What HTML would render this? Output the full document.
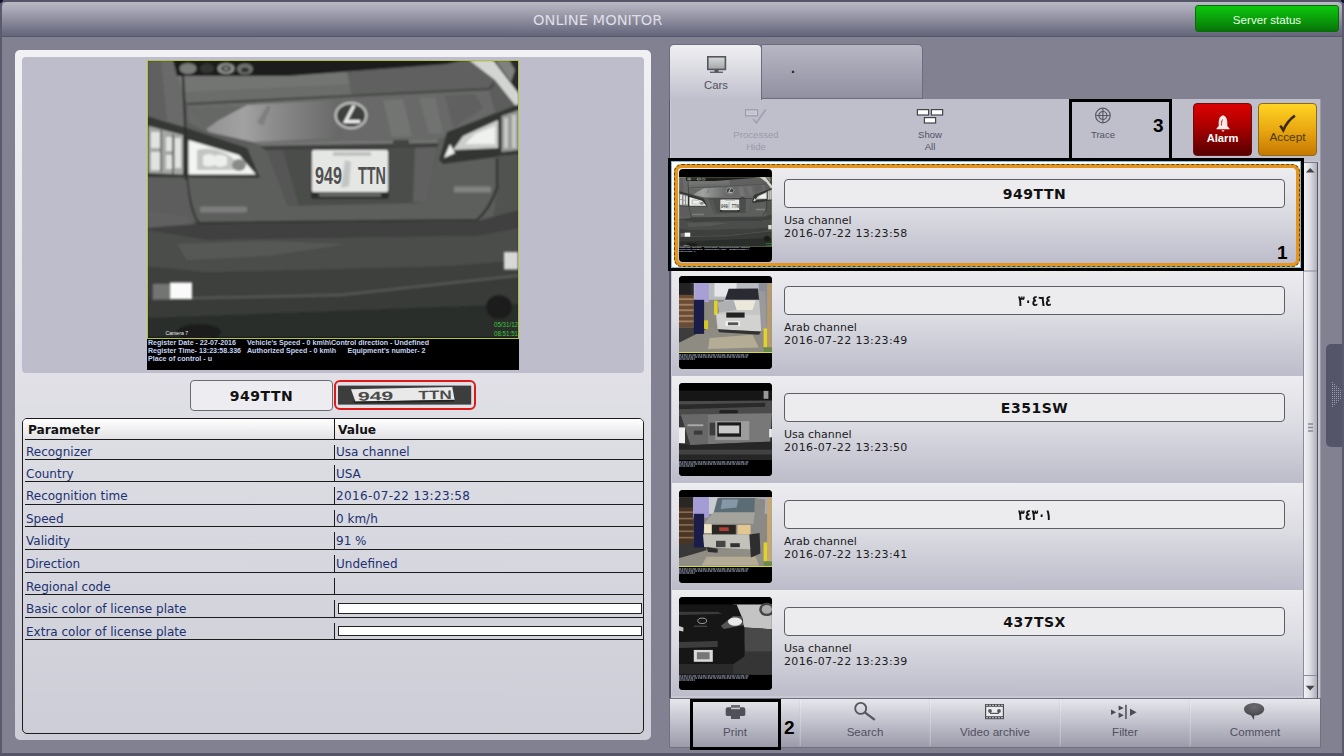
<!DOCTYPE html>
<html lang="en">
<head>
<meta charset="utf-8">
<title>Online Monitor</title>
<style>
*{box-sizing:border-box;margin:0;padding:0}
html,body{width:1344px;height:756px;overflow:hidden}
body{position:relative;background:#818191;font-family:"Liberation Sans",sans-serif;color:#222}
.abs{position:absolute}
.ver{font-family:"DejaVu Sans","Liberation Sans",sans-serif}
/* window frame */
#frT{left:0;top:0;width:1344px;height:2px;background:#555567}
#frL{left:0;top:0;width:2px;height:756px;background:#5a5a6c}
#frR{left:1342px;top:0;width:2px;height:756px;background:#5a5a6c}
#frB{left:0;top:753px;width:1344px;height:3px;background:#555567}
#cTL{left:0;top:0;width:3px;height:3px;background:#0a1430;border-bottom-right-radius:3px}#cTR{left:1341px;top:0;width:3px;height:3px;background:#0a1430;border-bottom-left-radius:3px}
#title{left:2px;top:2px;width:1340px;height:35px;background:linear-gradient(#babac6,#64647a);border-bottom:1px solid #565669;border-top-left-radius:5px;border-top-right-radius:5px}
#ttext{left:533px;top:10px;font-size:14.6px;color:#dedee6;white-space:nowrap;line-height:20px}
#srv{left:1195px;top:5px;width:144px;height:27px;border-radius:3px;background:linear-gradient(#0cc60c,#0aa00a 50%,#087408);border:1px solid #0a6a0a;color:#e8ffe8;font-size:11.6px;text-align:center;line-height:28px;padding-left:0}
/* left panel */
#lp{left:15px;top:50px;width:636px;height:690px;border-radius:5px;background:linear-gradient(#f1f1f4,#cdcdd7)}
#imgbox{left:22px;top:57px;width:622px;height:316px;border-radius:4px;background:#bdbdcb}
#ptxt{left:190px;top:380px;width:143px;height:31px;border:1px solid #6a6a72;border-radius:4px;background:#ededf1;text-align:center;font-weight:bold;font-size:14px;letter-spacing:.5px;line-height:31px;color:#111}
#pimg{left:333.5px;top:380px;width:142.5px;height:30px;border:2px solid #e01818;border-radius:6px;background:#e0e0e6}
/* table */
#tbl{left:22px;top:418px;width:622px;height:316px;border:1px solid #1c1c1c;border-radius:5px}
#th{left:23px;top:419px;width:620px;height:20px;border-radius:4px 4px 0 0;background:linear-gradient(#ffffff,#e2e2e6)}
.hl{left:25px;width:618px;height:1px;background:#1c1c1c}
.vl{left:334px;width:1px;background:#1c1c1c}
.tc{font-size:12px;color:#203070;white-space:nowrap;line-height:16px}
  .thc{font-size:12.2px;font-weight:bold;color:#111;white-space:nowrap;line-height:16px}
.cbar{left:338px;width:304px;height:9px;background:#fff;border:1px solid #222}
</style>
</head>
<body>
<div class="abs" id="title"></div>
<div class="abs ver" id="ttext">ONLINE MONITOR</div>
<div class="abs" id="srv">Server status</div>

<div class="abs" id="lp"></div>
<div class="abs" id="imgbox"></div>
<!--MAINIMG-->
<svg width="0" height="0" style="position:absolute">
<defs>
<filter id="blT" x="-5%" y="-5%" width="110%" height="110%"><feGaussianBlur stdDeviation="0.6"/></filter><filter id="bl1" x="-5%" y="-5%" width="110%" height="110%"><feGaussianBlur stdDeviation="1.1"/></filter>
<filter id="bl2" x="-10%" y="-10%" width="120%" height="120%"><feGaussianBlur stdDeviation="3"/></filter>
<linearGradient id="gBody" x1="0" y1="0" x2="0" y2="1"><stop offset="0" stop-color="#6a6a6a"/><stop offset="0.35" stop-color="#5e5e5e"/><stop offset="0.6" stop-color="#505050"/><stop offset="0.8" stop-color="#424242"/><stop offset="1" stop-color="#2c2c2c"/></linearGradient>
<linearGradient id="gRefl" x1="0" y1="0" x2="1" y2="0"><stop offset="0" stop-color="#8a8a8a"/><stop offset="0.35" stop-color="#a2a2a2"/><stop offset="0.55" stop-color="#8c8c8c"/><stop offset="1" stop-color="#666"/></linearGradient>
<symbol id="car1" viewBox="0 0 372 310" preserveAspectRatio="none">
<rect width="372" height="310" fill="#000"/>
<g filter="url(#bl1)"><rect x="0" y="0" width="372" height="278" fill="#5b5d5b"/><path d="M0 0H26L31 17L38 40L40 72L0 60Z" fill="#696b69"/><path d="M0 0H14L20 60L0 56Z" fill="#5f615f"/><path d="M30 16L140 16L300 4L330 0L346 24L342 29L40 44Z" fill="#6b6d6b"/><path d="M30 16L140 16L200 12L205 24L36 32Z" fill="#737573"/><path d="M200 12L300 4L330 0L346 24L342 29L205 36Z" fill="#5f615f"/><path d="M26 0H316L300 4L140 16L30 16Z" fill="#1b1d1b"/><ellipse cx="41" cy="8.500" rx="8.500" ry="5.500" fill="#797b79"/><ellipse cx="60" cy="8.500" rx="7" ry="5" fill="#333533"/><ellipse cx="79" cy="8.500" rx="8.500" ry="5.500" fill="#8f918f"/><ellipse cx="79" cy="8.500" rx="5" ry="3.200" fill="#393b39"/><ellipse cx="79" cy="8.500" rx="2.600" ry="1.600" fill="#878987"/><ellipse cx="98" cy="9" rx="8" ry="5.500" fill="#6f716f"/><ellipse cx="98" cy="10" rx="4" ry="2.500" fill="#2f312f"/><path d="M330 0H372V44L352 24Z" fill="#292b29"/><path d="M322 0H346L372 34V50L348 20Z" fill="#d3d5d3"/><path d="M348 0H362L368 10L364 22Z" fill="#7f817f"/><path d="M40 44L342 29L348 52L300 76L290 80L106 82L60 72L41 62Z" fill="#676967"/><path d="M42 48L190 40L196 78L106 82L62 72Z" fill="url(#gRefl)"/><path d="M42 48L100 45L72 60L58 70Z" fill="#656765"/><path d="M110 62L120 46L124 46L116 66Z" fill="#6f716f" opacity=".6"/><path d="M236 40l20-1l9 37l-20 1z" fill="#737573"/><path d="M272 38l16-1l8 36l-14 1z" fill="#717371"/><path d="M298 36l30-2l8 14l-30 20z" fill="#5f615f"/><path d="M40 44L342 29L347 23" stroke="#434543" stroke-width="2" fill="none"/><path d="M106 82L290 80L292 84L116 87Z" fill="#737573"/><path d="M112 86L292 83L290 88L120 91Z" fill="#3f413f"/><path d="M41 116L112 116L100 88L106 82L120 91L140 146L282 142L292 84L300 76L348 52L350 130Q340 158 330 160L52 163Q44 150 41 116Z" fill="#5d5f5d"/><path d="M120 90L290 87L280 143L141 146Z" fill="#4b4d4b"/><path d="M268 88L290 87L280 143L266 142Z" fill="#5f615f"/><path d="M120 90L136 90L152 146L141 146Z" fill="#555755"/><rect x="246" y="80" width="16" height="6" fill="#434543"/><ellipse cx="204" cy="55.500" rx="15.300" ry="12.500" fill="#3d3f3d" stroke="#bdbfbd" stroke-width="2.400"/><path d="M207 45.500L198.500 61.500H213" stroke="#f2f2f2" stroke-width="3" fill="none"/><rect x="164" y="89" width="78" height="50" rx="2" fill="#2b2d2b"/><rect x="165" y="90" width="76" height="42" rx="1.500" fill="#e5e7e5"/><rect x="186" y="92" width="38" height="4" fill="#bfc1bf"/><path d="M198 100l6 2l-2 24l-8 2z" fill="#c3c5c3"/><rect x="172" y="133.500" width="62" height="3" fill="#6f716f"/><path d="M0 56L40 68L100 88L113 118L0 117Z" fill="#353735"/><path d="M1.500 66L36 75V114.500L1.500 113Z" fill="#a5a7a5"/><path d="M4 72h9v16h-9zM4 92h9v18h-9zM19 77h6v14h-6zM28 78h6v30h-6zM19 95h6v14h-6z" fill="#e1e3e1"/><path d="M14 70v42M26 74v40" stroke="#4f514f" stroke-width="1.500"/><path d="M41.500 80L92 95L109 114.500L41.500 114.500Z" fill="#f3f5f3"/><path d="M50 90q14-4 30 4q10 6 16 16l-46 0z" fill="#c3c5c3"/><path d="M56 96q6-4 12 0q6-3 12 1l0 8q-8 4-12 0q-6 3-12 0z" fill="#edefed"/><ellipse cx="92" cy="105" rx="7" ry="6" fill="#898b89"/><path d="M36 16L38 60L39 120" stroke="#2b2d2b" stroke-width="2.200" fill="none"/><path d="M292 100L300 72L352 52L372 44V94L296 104Z" fill="#333533"/><path d="M306 90L316 76L351 60V88Z" fill="#cbcdcb"/><path d="M318 84L328 74L348 66V84Z" fill="#eff1ef"/><path d="M297 98l6-14l5 9z" fill="#edefed"/><path d="M354.500 56L372 50V90L354.500 92Z" fill="#979997"/><path d="M357 58h4v30h-4zM365 55h4v33h-4z" fill="#c7c9c7"/><path d="M350 96L372 94V150L346 158Q350 140 350 96Z" fill="#515351"/><path d="M40 118Q43 152 52 163L330 160Q342 150 350 128L350 98" stroke="#2f312f" stroke-width="2.200" fill="none"/><rect x="53" y="146.500" width="47" height="6" rx="1" fill="#858785" opacity=".75"/><rect x="307" y="126.500" width="37" height="6" rx="1" fill="#919391" opacity=".7"/><path d="M0 150L40 156L52 164L330 161L372 150V170L330 176L60 180L0 172Z" fill="#3f413f"/><path d="M0 120L40 120Q42 150 50 162L0 160Z" fill="#5b5d5b"/><path d="M0 150L40 156L48 164L0 168Z" fill="#5f615f"/><path d="M0 170L60 180L330 176L372 168V200L300 206L60 212L0 206Z" fill="#4b4d4b"/><path d="M30 184L120 181L200 184L120 196L40 200Z" fill="#575957"/><path d="M0 206L60 212L300 206L372 200V215L194 234L5 238L0 238Z" fill="#3d3f3d"/><path d="M0 238L194 234L372 215V278H0Z" fill="#393b39"/><path d="M5 239L194 235L372 215.500" stroke="#555755" stroke-width="2.600" fill="none"/><path d="M0 258L372 244V278H0Z" fill="#2b2d2b"/><ellipse cx="352" cy="247" rx="13" ry="12" fill="#1d1f1d"/><ellipse cx="52" cy="272" rx="22" ry="8" fill="#1b1d1b"/><path d="M6 224h18v15h-18z" fill="#737573"/></g>
<!-- reflectors -->
<g filter="url(#bl1)"><rect x="23" y="222.500" width="22" height="16.500" fill="#fafafa"/><rect x="357" y="192" width="14" height="17.500" fill="#d8d8d8"/></g>
<!-- plate text -->
<text x="168" y="124" font-family="Liberation Sans, sans-serif" font-size="24" font-weight="bold" fill="#505050" textLength="27" lengthAdjust="spacingAndGlyphs">949</text>
<text x="211" y="124" font-family="Liberation Sans, sans-serif" font-size="24" font-weight="bold" fill="#505050" textLength="28" lengthAdjust="spacingAndGlyphs">TTN</text>
<!-- frame -->
<rect x="0.5" y="0.5" width="371" height="278" fill="none" stroke="#b4c23c" stroke-width="1"/>
<!-- overlay texts -->
<g font-family="Liberation Sans, sans-serif" font-weight="bold" font-size="6.8" fill="#c6d4f2">
<text x="1" y="285.3" textLength="88" lengthAdjust="spacingAndGlyphs">Register Date - 22-07-2016</text>
<text x="100" y="285.3" textLength="182" lengthAdjust="spacingAndGlyphs">Vehicle's Speed - 0 km\h\Control direction - Undefined</text>
<text x="1" y="293.2" textLength="93" lengthAdjust="spacingAndGlyphs">Register Time- 13:23:58.336</text>
<text x="100" y="293.2" textLength="89" lengthAdjust="spacingAndGlyphs">Authorized Speed - 0 km\h</text>
<text x="200.5" y="293.2" textLength="78" lengthAdjust="spacingAndGlyphs">Equipment's number- 2</text>
<text x="1" y="301" textLength="64" lengthAdjust="spacingAndGlyphs">Place of control - u</text>
</g>
<text x="18.5" y="275" font-family="Liberation Sans, sans-serif" font-size="6" fill="#eee" textLength="22.5" lengthAdjust="spacingAndGlyphs">Camera 7</text>
<text x="347" y="267" font-family="Liberation Sans, sans-serif" font-size="6.5" fill="#3cc43c" textLength="24" lengthAdjust="spacingAndGlyphs">05/31/12</text>
<text x="347" y="276.4" font-family="Liberation Sans, sans-serif" font-size="6.5" fill="#3cc43c" textLength="24" lengthAdjust="spacingAndGlyphs">08:51:51</text>
</symbol>
</defs>
</svg>
<svg class="abs" style="left:147px;top:60px" width="372" height="310"><use href="#car1" width="372" height="310"/></svg>

<!--/MAINIMG-->
<div class="abs ver" id="ptxt">949TTN</div>
<div class="abs" id="pimg"></div>
<!--PLATEIMG-->
<svg class="abs" style="left:338px;top:385px" width="134" height="20" viewBox="0 0 134 20"><rect x="0" y="0.600" width="133.200" height="19" fill="#3d3d3d"/><g filter="url(#blT)"><polygon points="13,4.200 114.300,1.900 116.600,15 17.500,16.800" fill="#e9e9e9"/><polygon points="14,16.500 116,14.700 116.500,16.500 18,18.300" fill="#222"/></g><g font-family="Liberation Sans, sans-serif" font-weight="bold" font-size="12.500" fill="#4a4a4a" transform="rotate(-1.200 60 10)"><text x="19.800" y="15" textLength="35.500" lengthAdjust="spacingAndGlyphs">949</text><text x="80.500" y="15" textLength="33.200" lengthAdjust="spacingAndGlyphs">TTN</text></g></svg>

<!--/PLATEIMG-->

<div class="abs" id="tbl"></div>
<div class="abs" id="th"></div>
<!--TABLE-->
<div class="abs ver thc" style="left:28px;top:421.6px">Parameter</div>
<div class="abs ver thc" style="left:338px;top:421.6px">Value</div>
<div class="abs vl" style="top:419px;height:20px"></div>
<div class="abs hl" style="top:439px"></div>
<div class="abs hl" style="top:459px"></div>
<div class="abs hl" style="top:481px"></div>
<div class="abs hl" style="top:504px"></div>
<div class="abs hl" style="top:526px"></div>
<div class="abs hl" style="top:549px"></div>
<div class="abs hl" style="top:572px"></div>
<div class="abs hl" style="top:594px"></div>
<div class="abs hl" style="top:617px"></div>
<div class="abs hl" style="top:639px"></div>
<div class="abs vl" style="top:445px;height:14px"></div>
<div class="abs ver tc" style="left:26px;top:443.5px">Recognizer</div>
<div class="abs ver tc" style="left:336px;top:443.5px">Usa channel</div>
<div class="abs vl" style="top:465px;height:16px"></div>
<div class="abs ver tc" style="left:26px;top:466.0px">Country</div>
<div class="abs ver tc" style="left:336px;top:466.0px">USA</div>
<div class="abs vl" style="top:487px;height:17px"></div>
<div class="abs ver tc" style="left:26px;top:487.6px">Recognition time</div>
<div class="abs ver tc" style="left:336px;top:487.6px;letter-spacing:0.36px">2016-07-22 13:23:58</div>
<div class="abs vl" style="top:510px;height:16px"></div>
<div class="abs ver tc" style="left:26px;top:510.8px">Speed</div>
<div class="abs ver tc" style="left:336px;top:510.8px">0 km/h</div>
<div class="abs vl" style="top:532px;height:17px"></div>
<div class="abs ver tc" style="left:26px;top:533.2px">Validity</div>
<div class="abs ver tc" style="left:336px;top:533.2px">91 %</div>
<div class="abs vl" style="top:555px;height:17px"></div>
<div class="abs ver tc" style="left:26px;top:555.6px">Direction</div>
<div class="abs ver tc" style="left:336px;top:555.6px">Undefined</div>
<div class="abs vl" style="top:578px;height:16px"></div>
<div class="abs ver tc" style="left:26px;top:578.5px">Regional code</div>
<div class="abs vl" style="top:600px;height:17px"></div>
<div class="abs ver tc" style="left:26px;top:601.2px">Basic color of license plate</div>
<div class="abs cbar" style="top:603px;height:11px"></div>
<div class="abs vl" style="top:623px;height:16px"></div>
<div class="abs ver tc" style="left:26px;top:623.5px">Extra color of license plate</div>
<div class="abs cbar" style="top:626px;height:10px"></div>
<!--/TABLE-->

<!--RIGHT-->
<style>
#tab1{left:669px;top:44px;width:93px;height:56px;border:1px solid #6c6c7e;border-bottom:none;border-radius:5px 5px 0 0;background:linear-gradient(#f0f0f3,#d8d8e0 50%,#bfbfcc)}
#tab2{left:761px;top:44px;width:162px;height:55px;border:1px solid #6c6c7e;border-radius:0 5px 0 0;background:linear-gradient(#b7b7c4,#a3a3b2 50%,#9090a1)}
#tbar{left:669px;top:99px;width:652px;height:62px;background:#bfbfcc;border-left:1px solid #58586c;box-shadow:inset 1px 0 #cbcbd6;border-right:1px solid #9a9aaa}
#list{left:669px;top:161px;width:652px;height:537px;background:#c8c8d4;border-left:2px solid #52526a;border-right:1px solid #9a9aaa}
.item{left:672px;width:631px;height:107px;background:linear-gradient(#ededf0,#dcdce3 45%,#bcbcca)}
.thumb{left:679px;width:93px;height:93px;border-radius:4px;background:#000;overflow:hidden}
.pbox{left:784px;width:501px;height:29px;border:1px solid #5e5e66;border-radius:4px;background:#ececef;text-align:center;font-weight:bold;font-size:14px;letter-spacing:.5px;line-height:28px;color:#111}
.itx{left:784px;font-size:11px;line-height:13px;color:#1c1c1c;white-space:nowrap}.itx i{font-style:normal;letter-spacing:.36px}
#sb{left:1303px;top:162px;width:15px;border-left:1px solid #8c8c9a;height:536px;background:linear-gradient(90deg,#f2f2f5,#dadae1 50%,#aeaeba);border-right:1px solid #55555f;border-top:1px solid #77778a}
#btb{left:669px;top:698px;width:652px;height:50px;border:1px solid #70707f;background:linear-gradient(#e6e6ec,#c4c4cf 45%,#9a9aa9)}
.bsep{top:700px;height:46px;background:rgba(255,255,255,.22);border-left:1px solid rgba(90,90,110,.10);width:2px}
.btx{top:724px;width:130px;text-align:center;font-size:11.6px;line-height:16px;color:#50505e;white-space:nowrap}
.ttx{text-align:center;font-size:9.6px;line-height:12px;white-space:nowrap}
.ann{border:3px solid #000}
.annn{font-weight:bold;font-size:19px;line-height:19px;color:#000}
#alarm{left:1193px;top:103px;width:59px;height:53px;border-radius:4px;border:1px solid #6a1010;background:linear-gradient(#dc0000,#b00000 40%,#580000)}
#accept{left:1258px;top:103px;width:59px;height:53px;border-radius:4px;border:1px solid #8a6a18;background:linear-gradient(#ffd422,#eaa812 50%,#c67800)}
#handle{left:1326px;top:344px;width:20px;height:103px;border-radius:5px;background:#55556a}
</style>

<div class="abs" id="tab2"></div>
<div class="abs" style="left:791px;top:61.400px;font-size:14px;line-height:14px;color:#1c1c24;font-weight:bold">.</div>
<div class="abs" id="tbar"></div>
<div class="abs" id="tab1"></div>
<svg class="abs" style="left:705px;top:54px" width="24" height="20" viewBox="0 0 24 20"><defs><linearGradient id="gMon" x1="0" y1="0" x2="0" y2="1"><stop offset="0" stop-color="#d6dada"/><stop offset="1" stop-color="#a2a6aa"/></linearGradient></defs><rect x="2.8" y="2.8" width="17.6" height="12.6" fill="url(#gMon)" stroke="#55555a" stroke-width="1.6"/><rect x="9.5" y="16" width="4" height="2" fill="#55555a"/><rect x="5" y="17.6" width="13" height="1.3" fill="#55555a"/></svg>
<div class="abs" style="left:670px;top:78px;width:92px;text-align:center;font-size:11.3px;line-height:14px;color:#50505a">Cars</div>
<svg class="abs" style="left:743px;top:107px" width="26" height="18" viewBox="0 0 26 18"><rect x="2.6" y="2.8" width="12" height="6" fill="#d0d0da" stroke="#9c9cac" stroke-width="1.3"/><path d="M4.5 5h3l2 1.6h3M4.5 6.6h3l2-1.6h3" stroke="#b4b4c2" stroke-width=".7" fill="none"/><path d="M10 12l3.4 3.8L22.8 2.4" stroke="#a0a0b0" stroke-width="1.7" fill="none"/></svg>
<div class="abs ttx" style="left:716px;top:128.6px;width:80px;color:#9a9aaa">Processed<br>Hide</div>
<svg class="abs" style="left:915px;top:107px" width="30" height="18" viewBox="0 0 30 18"><g fill="#fff" stroke="#44444c" stroke-width="1.2"><rect x="2.4" y="2.6" width="11.2" height="5.4"/><rect x="16.4" y="2.6" width="11.2" height="5.4"/><rect x="9.4" y="10.6" width="11.2" height="5.4"/></g></svg>
<div class="abs ttx" style="left:890px;top:128.6px;width:80px;color:#50505e">Show<br>All</div>
<svg class="abs" style="left:1093px;top:106px" width="20" height="20" viewBox="0 0 20 20"><g fill="none" stroke="#5a5a64" stroke-width="1.2"><circle cx="9.9" cy="9.5" r="7.3"/><circle cx="9.9" cy="9.5" r="4"/><path d="M2.6 9.5h14.6M9.9 2.2v14.6"/></g></svg>
<div class="abs ttx" style="left:1063px;top:128.6px;width:80px;color:#50505e">Trace</div>
<div class="abs" id="alarm"></div>
<svg class="abs" style="left:1214px;top:113px" width="18" height="20" viewBox="0 0 18 20"><path d="M9 2.2c-3 .8-4.300 3.600-4.300 7.200v3.600l-2.200 2.400v.8h13v-.8l-2.200-2.400V9.400C13.300 5.800 12 3 9 2.200z" fill="#ffe8e8"/><path d="M7.400 17.200h3.200L9 19z" fill="#ffe8e8"/><path d="M8.600 6.500c-1 1.400-1.200 3.400-1.200 6" stroke="#b02020" stroke-width="1" fill="none"/></svg>
<div class="abs" style="left:1193px;top:131.6px;width:59px;text-align:center;font-weight:bold;font-size:11.2px;line-height:13px;color:#fff">Alarm</div>
<div class="abs" id="accept"></div>
<svg class="abs" style="left:1277px;top:112px" width="22" height="22" viewBox="0 0 22 22"><path d="M3.300 13.600l3 4.600C9 12 13 7 17.900 3.600" stroke="#3a2c0a" stroke-width="2.600" fill="none" stroke-linecap="butt"/></svg>
<div class="abs" style="left:1258px;top:131.4px;width:59px;text-align:center;font-size:11.8px;line-height:13px;color:#4a3a10">Accept</div>
<div class="abs" id="list"></div>
<div class="abs item" style="top:162px;height:107px"></div>
<div class="abs" style="left:671px;top:161px;width:630px;height:107px;border:1px solid #7cc0e0;background:#fff"></div>
<div class="abs" style="left:674px;top:164px;width:626px;height:103px;border:4px solid #e39520;border-radius:8px;background:linear-gradient(#ededf0,#dcdce3 45%,#bdbdcb)"></div>
<div class="abs" style="left:674px;top:164px;width:626px;height:103px;border:1px dashed #5a4418;border-radius:8px"></div>
<div class="abs thumb" style="top:169px"><!--t1--><svg width="93" height="93" viewBox="0 0 93 93" style="display:block"><use href="#car1" x="0" y="8" width="93" height="77.500"/></svg></div>
<div class="abs pbox ver" style="top:179px">949TTN</div>
<div class="abs itx ver" style="top:213.9px">Usa channel<br><i>2016-07-22 13:23:58</i></div>
<div class="abs item" style="top:269px;height:107px"></div>
<div class="abs thumb" style="top:276px"><!--t2--><svg width="93" height="93" viewBox="0 0 93 93" style="display:block"><rect width="93" height="93" fill="#000"/><g filter="url(#blT)"><rect x="0.0" y="7.1" width="92.9" height="69.0" fill="#8c8a80"/><rect x="0.0" y="7.1" width="92.9" height="16.7" fill="#b8bcc0"/><rect x="35.4" y="7.1" width="22.2" height="13.5" fill="#e4e6e8"/><rect x="79.8" y="7.1" width="13.0" height="26.2" fill="#8a8e98"/><rect x="0.0" y="7.1" width="14.8" height="12.7" fill="#2c2c30"/><rect x="0.0" y="19.0" width="14.8" height="32.5" fill="#6a4c34"/><rect x="0.0" y="22.2" width="14.8" height="1.9" fill="#a08060"/><rect x="0.0" y="27.8" width="14.8" height="1.9" fill="#a08060"/><rect x="0.0" y="33.3" width="14.8" height="1.9" fill="#a08060"/><rect x="0.0" y="38.9" width="14.8" height="1.9" fill="#a08060"/><rect x="0.0" y="44.4" width="14.8" height="1.9" fill="#a08060"/><rect x="0.0" y="51.6" width="28.3" height="15.1" fill="#3c3c3c"/><polygon points="0.0,66.7 28.3,52.4 92.9,52.4 92.9,76.2 0.0,76.2" fill="#8e8c82"/><polygon points="30.6,61.9 73.5,58.7 79.8,71.4 29.0,73.0" fill="#b4ac94"/><rect x="0.0" y="7.1" width="11.6" height="11.1" fill="#222"/><rect x="15.6" y="7.1" width="14.3" height="19.0" fill="#a8a0d4"/><rect x="14.8" y="23.8" width="10.3" height="34.1" fill="#1c1a4a"/><rect x="25.1" y="44.4" width="4.0" height="8.7" fill="#d8c820"/><rect x="35.1" y="24.6" width="3.5" height="14.3" fill="#e0d428"/><polygon points="49.7,12.7 79.0,12.4 80.2,24.6 45.7,24.6" fill="#2a2a32"/><polygon points="45.7,23.8 80.2,23.8 83.8,39.7 38.6,38.9" fill="#c6c6c4"/><polygon points="54.4,24.6 76.7,24.6 73.5,34.1 57.6,34.1" fill="#ece8da"/><polygon points="38.6,26.2 54.4,23.8 57.6,34.1 40.2,36.5" fill="#aeb0b4"/><polygon points="37.0,38.1 83.8,38.9 82.2,55.6 38.6,53.2" fill="#d2d2d0"/><rect x="47.3" y="36.5" width="18.3" height="5.1" fill="#222"/><rect x="46.5" y="45.2" width="14.3" height="4.8" fill="#f4f4f4"/><rect x="48.9" y="46.3" width="10.3" height="2.9" fill="#555"/><polygon points="79.8,14.3 86.2,15.9 87.8,52.4 82.2,55.6" fill="#9a9a9c"/><polygon points="38.6,53.2 82.2,55.6 79.8,58.7 40.2,56.3" fill="#333"/><rect x="88.1" y="7.1" width="4.8" height="64.3" fill="#b49a70"/><rect x="84.6" y="52.4" width="3.5" height="19.0" fill="#e0d428"/><rect x="84.6" y="71.4" width="8.3" height="4.8" fill="#6a8a4a"/></g><rect x="0" y="76" width="93" height="1" fill="#d8d838"/><g stroke="#ccd8f6" stroke-width="0.900" fill="none"><path d="M0 79H70" stroke-dasharray="2.200 0.600 1.200 0.500 3 0.700 0.800 0.600"/><path d="M0 81H69" stroke-dasharray="1.600 0.500 2.400 0.700 1 0.500 2 0.800"/><path d="M0 83H16" stroke-dasharray="1.800 0.600 1.200 0.500"/></g></svg></div>
<div class="abs pbox ver" style="top:286px"><span style="display:inline-block;letter-spacing:0;font-size:15px;transform:scaleX(.74)">٣٠٤٦٤</span></div>
<div class="abs itx ver" style="top:320.9px">Arab channel<br><i>2016-07-22 13:23:49</i></div>
<div class="abs item" style="top:376px;height:107px"></div>
<div class="abs thumb" style="top:383px"><!--t3--><svg width="93" height="93" viewBox="0 0 93 93" style="display:block"><rect width="93" height="93" fill="#000"/><g filter="url(#blT)"><rect x="0.0" y="7.9" width="92.9" height="69.0" fill="#383838"/><rect x="0.0" y="7.9" width="92.9" height="10.3" fill="#161616"/><rect x="84.6" y="7.9" width="4.8" height="7.9" fill="#999"/><polygon points="0.0,18.3 92.9,17.5 92.9,31.7 0.0,33.3" fill="#4c4c4c"/><polygon points="0.0,21.4 86.2,19.8 86.2,23.8 0.0,26.2" fill="#2a2a2a"/><polygon points="2.1,31.7 92.9,30.2 91.0,58.7 11.6,61.9" fill="#787878"/><polygon points="2.1,31.7 29.0,31.4 29.0,61.1 11.6,61.9" fill="#686868"/><rect x="40.2" y="27.0" width="19.0" height="3.2" fill="#222" rx="1.500"/><rect x="36.2" y="38.1" width="34.1" height="19.0" fill="#9c9c9c"/><rect x="30.6" y="39.7" width="5.6" height="12.7" fill="#3c3c3c"/><rect x="38.3" y="39.4" width="23.7" height="14.3" fill="#1c1c1c"/><rect x="39.8" y="42.5" width="20.5" height="7.9" fill="#cacaca"/><rect x="0.0" y="44.4" width="6.0" height="15.9" fill="#f0f0f0"/><rect x="90.2" y="46.0" width="2.7" height="8.3" fill="#eee"/><polygon points="0.0,60.3 11.6,61.9 91.0,58.7 92.9,58.7 92.9,77.0 0.0,77.0" fill="#262626"/><rect x="0.0" y="66.7" width="92.9" height="4.8" fill="#424242"/><rect x="8.4" y="41.3" width="15.9" height="1.9" fill="#aaa"/><rect x="14.8" y="47.6" width="8.7" height="4.0" fill="#3a3a3a"/></g><g stroke="#ccd8f6" stroke-width="0.900" fill="none"><path d="M0 79H70" stroke-dasharray="2.200 0.600 1.200 0.500 3 0.700 0.800 0.600"/><path d="M0 81H69" stroke-dasharray="1.600 0.500 2.400 0.700 1 0.500 2 0.800"/><path d="M0 83H16" stroke-dasharray="1.800 0.600 1.200 0.500"/></g></svg></div>
<div class="abs pbox ver" style="top:393px">E351SW</div>
<div class="abs itx ver" style="top:427.9px">Usa channel<br><i>2016-07-22 13:23:50</i></div>
<div class="abs item" style="top:483px;height:107px"></div>
<div class="abs thumb" style="top:490px"><!--t4--><svg width="93" height="93" viewBox="0 0 93 93" style="display:block"><rect width="93" height="93" fill="#000"/><g filter="url(#blT)"><rect x="0.0" y="7.1" width="92.9" height="69.0" fill="#8c8a80"/><rect x="0.0" y="7.1" width="92.9" height="16.7" fill="#a8acb0"/><rect x="29.0" y="7.1" width="11.1" height="16.7" fill="#c8ccd0"/><rect x="0.0" y="7.1" width="14.8" height="11.1" fill="#2a2622"/><rect x="0.0" y="17.5" width="14.8" height="38.1" fill="#4a3626"/><rect x="0.0" y="21.4" width="14.8" height="1.6" fill="#8a6c50"/><rect x="0.0" y="27.8" width="14.8" height="1.6" fill="#8a6c50"/><rect x="0.0" y="34.1" width="14.8" height="1.6" fill="#8a6c50"/><rect x="0.0" y="40.5" width="14.8" height="1.6" fill="#8a6c50"/><rect x="0.0" y="46.8" width="14.8" height="1.6" fill="#8a6c50"/><polygon points="0.0,55.6 14.8,52.4 27.5,55.6 27.5,61.9 0.0,68.3" fill="#383838"/><polygon points="0.0,68.3 27.5,60.3 92.9,58.7 92.9,76.2 0.0,76.2" fill="#908e84"/><polygon points="27.5,66.7 76.7,66.7 79.8,75.4 22.7,75.4" fill="#b4ac94"/><rect x="14.0" y="7.1" width="15.9" height="20.6" fill="#a49cd4"/><rect x="14.8" y="23.8" width="10.3" height="33.7" fill="#1e1a48"/><polygon points="38.6,7.9 77.5,7.9 75.9,23.0 34.6,23.0" fill="#5c6c74"/><polygon points="43.3,9.5 59.2,9.5 57.6,17.5 41.7,19.0" fill="#8498a8"/><polygon points="75.9,7.9 86.2,9.5 84.6,44.4 74.3,44.4" fill="#8a8a88"/><polygon points="34.6,22.2 75.9,22.2 74.3,34.1 25.1,34.1" fill="#a4a49c"/><polygon points="25.1,33.7 74.3,33.7 73.5,45.2 24.6,45.2" fill="#8a8a84"/><rect x="33.0" y="34.9" width="23.8" height="9.8" fill="#2c2824"/><rect x="40.2" y="37.3" width="9.5" height="3.7" fill="#b04030"/><rect x="25.1" y="34.1" width="7.5" height="9.0" fill="#ece4c4"/><rect x="58.4" y="34.9" width="13.2" height="9.5" fill="#e2c890"/><polygon points="24.0,44.4 73.8,44.4 73.2,59.5 25.1,57.1" fill="#c2c2ba"/><rect x="37.0" y="50.8" width="9.5" height="6.3" fill="#444"/><rect x="51.3" y="53.2" width="9.5" height="4.0" fill="#333"/><polygon points="70.3,44.4 80.6,42.9 81.4,63.5 71.9,67.5" fill="#2e2e2e"/><polygon points="27.5,57.1 38.6,58.7 38.6,62.7 29.0,61.9" fill="#2e2e2e"/><rect x="88.1" y="7.1" width="4.8" height="64.3" fill="#c2a878"/><rect x="84.6" y="52.4" width="3.5" height="19.0" fill="#e0d428"/><rect x="84.6" y="71.4" width="8.3" height="4.8" fill="#6a8a4a"/></g><rect x="0" y="76" width="93" height="1" fill="#d8d838"/><g stroke="#ccd8f6" stroke-width="0.900" fill="none"><path d="M0 79H70" stroke-dasharray="2.200 0.600 1.200 0.500 3 0.700 0.800 0.600"/><path d="M0 81H69" stroke-dasharray="1.600 0.500 2.400 0.700 1 0.500 2 0.800"/><path d="M0 83H16" stroke-dasharray="1.800 0.600 1.200 0.500"/></g></svg></div>
<div class="abs pbox ver" style="top:500px"><span style="display:inline-block;letter-spacing:0;font-size:15px;transform:scaleX(.74)">٣٤٣٠١</span></div>
<div class="abs itx ver" style="top:534.9px">Arab channel<br><i>2016-07-22 13:23:41</i></div>
<div class="abs item" style="top:590px;height:106px"></div>
<div class="abs thumb" style="top:597px"><!--t5--><svg width="93" height="93" viewBox="0 0 93 93" style="display:block"><rect width="93" height="93" fill="#000"/><g filter="url(#blT)"><rect x="0.0" y="7.6" width="92.9" height="69.8" fill="#1c1c1c"/><polygon points="54.4,7.6 92.9,7.6 92.9,32.2 65.6,30.6" fill="#c4c4c4"/><ellipse cx="87.8" cy="12.4" rx="7.6" ry="6.7" fill="#444"/><ellipse cx="87.8" cy="12.4" rx="5.1" ry="4.4" fill="#aaa"/><polygon points="65.6,30.6 92.9,32.2 92.9,77.5 65.6,77.5" fill="#484848"/><polygon points="65.6,54.4 92.9,54.4 92.9,77.5 46.5,77.5 54.4,65.6" fill="#343434"/><polygon points="0.0,7.6 57.6,7.6 64.0,22.7 65.6,59.2 54.4,67.1 0.0,67.1" fill="#141414"/><polygon points="0.0,14.8 38.6,14.8 43.3,17.1 0.0,17.9" fill="#3a3a3a"/><polygon points="41.7,29.0 54.4,18.7 63.2,19.5 64.0,28.3 44.9,31.9" fill="#555"/><ellipse cx="56.0" cy="24.6" rx="7.1" ry="4.1" fill="#e8e8e8"/><polygon points="0.0,44.9 38.6,44.1 38.6,50.0 0.0,51.0" fill="#3e3e3e"/><rect x="14.8" y="52.9" width="19.0" height="11.9" fill="#dadada"/><rect x="17.9" y="55.2" width="12.7" height="7.1" fill="#777"/><ellipse cx="23.2" cy="23.8" rx="4.4" ry="2.7" fill="none" stroke="#c0c0c0" stroke-width="0.800"/><rect x="14.8" y="28.7" width="13.5" height="1.0" fill="#555"/><polygon points="0.0,29.0 4.4,30.6 4.4,34.6 0.0,33.8" fill="#ccc"/><rect x="0.0" y="67.1" width="54.4" height="10.3" fill="#2c2c2c"/></g><g stroke="#ccd8f6" stroke-width="0.900" fill="none"><path d="M0 79H70" stroke-dasharray="2.200 0.600 1.200 0.500 3 0.700 0.800 0.600"/><path d="M0 81H69" stroke-dasharray="1.600 0.500 2.400 0.700 1 0.500 2 0.800"/><path d="M0 83H16" stroke-dasharray="1.800 0.600 1.200 0.500"/></g></svg></div>
<div class="abs pbox ver" style="top:607px">437TSX</div>
<div class="abs itx ver" style="top:641.9px">Usa channel<br><i>2016-07-22 13:23:39</i></div>
<div class="abs" id="sb"></div>
<svg class="abs" style="left:1304px;top:163px" width="14" height="535" viewBox="0 0 14 535"><path d="M1.800 9.600L6.200 5L10.600 9.600Z" fill="#44444c"/><rect x="0" y="107.500" width="13" height="1" fill="#8a8a98"/><path d="M4 261h5M4 264.500h5M4 268h5" stroke="#8a8a98" stroke-width="1.600"/><rect x="0" y="512" width="13" height="1" fill="#8a8a98"/><path d="M1.800 522.800L6.200 527.400L10.600 522.800Z" fill="#44444c"/></svg>
<div class="abs" id="btb"></div>
<div class="abs bsep" style="left:799px"></div>
<div class="abs bsep" style="left:929px"></div>
<div class="abs bsep" style="left:1059px"></div>
<div class="abs bsep" style="left:1189px"></div>
<div class="abs btx" style="left:670px">Print</div>
<div class="abs btx" style="left:800px">Search</div>
<div class="abs btx" style="left:930px">Video archive</div>
<div class="abs btx" style="left:1060px">Filter</div>
<div class="abs btx" style="left:1190px">Comment</div>
<svg class="abs" style="left:723px;top:703px" width="24" height="18" viewBox="0 0 24 18"><rect x="8" y="2" width="9" height="3" fill="#6a6a72"/><path d="M2.700 6.200q0-2 2-2h15.600q2 0 2 2v5.300q0 1.400-1.400 1.400H4.100q-1.400 0-1.400-1.400z" fill="#505058"/><rect x="8" y="4.600" width="9" height="1.600" fill="#c8c8d2"/><rect x="8" y="12" width="9" height="4" fill="#505058"/></svg>
<svg class="abs" style="left:852px;top:700px" width="26" height="22" viewBox="0 0 26 22"><circle cx="8.700" cy="8.400" r="5.500" fill="none" stroke="#55555e" stroke-width="1.800"/><path d="M12.800 12.300L22.800 19.800" stroke="#55555e" stroke-width="2.300"/></svg>
<svg class="abs" style="left:984px;top:703px" width="22" height="18" viewBox="0 0 22 18"><rect x="1" y="1" width="19" height="15.200" fill="#4c4c54"/><rect x="2.200" y="3.800" width="16.600" height="9.400" fill="#ececf0"/><g fill="#dcdce4"><rect x="2.200" y="1.800" width="1.600" height="1.100"/><rect x="5.200" y="1.800" width="1.600" height="1.100"/><rect x="8.200" y="1.800" width="1.600" height="1.100"/><rect x="11.200" y="1.800" width="1.600" height="1.100"/><rect x="14.200" y="1.800" width="1.600" height="1.100"/><rect x="17.200" y="1.800" width="1.600" height="1.100"/><rect x="2.200" y="14.200" width="1.600" height="1.100"/><rect x="5.200" y="14.200" width="1.600" height="1.100"/><rect x="8.200" y="14.200" width="1.600" height="1.100"/><rect x="11.200" y="14.200" width="1.600" height="1.100"/><rect x="14.200" y="14.200" width="1.600" height="1.100"/><rect x="17.200" y="14.200" width="1.600" height="1.100"/></g><circle cx="6" cy="8" r="1.900" fill="#55555c"/><circle cx="15" cy="8" r="1.900" fill="#55555c"/><path d="M6 10.400h9" stroke="#55555c" stroke-width="1.200"/></svg>
<svg class="abs" style="left:1109px;top:703px" width="30" height="18" viewBox="0 0 30 18"><g fill="#4c4c54"><path d="M2 6.400L7.200 9.200L2 12z"/><path d="M9.600 2.500L14.800 5L9.600 7.500z"/><path d="M9.600 9.600L14.800 12.300L9.600 15z"/><rect x="16.200" y="1.800" width="1.500" height="14.200"/><path d="M21 5.700L27.600 9.300L21 12.900z"/></g></svg>
<svg class="abs" style="left:1242px;top:701px" width="26" height="22" viewBox="0 0 26 22"><defs><radialGradient id="gCm" cx=".5" cy=".3" r=".7"><stop offset="0" stop-color="#6c6c72"/><stop offset="1" stop-color="#48484e"/></radialGradient></defs><ellipse cx="12.100" cy="8.300" rx="10.100" ry="6.300" fill="url(#gCm)"/><path d="M8.600 13.500L12 19L12.400 13.800z" fill="#48484e"/></svg>
<div class="abs" id="handle"></div>
<svg class="abs" style="left:1332px;top:382px" width="14" height="26" viewBox="0 0 14 26" fill="#9a9aae"><rect x="0" y="0" width="1" height="1"/><rect x="0" y="2" width="1" height="1"/><rect x="2" y="2" width="1" height="1"/><rect x="0" y="4" width="1" height="1"/><rect x="2" y="4" width="1" height="1"/><rect x="4" y="4" width="1" height="1"/><rect x="0" y="6" width="1" height="1"/><rect x="2" y="6" width="1" height="1"/><rect x="4" y="6" width="1" height="1"/><rect x="6" y="6" width="1" height="1"/><rect x="0" y="8" width="1" height="1"/><rect x="2" y="8" width="1" height="1"/><rect x="4" y="8" width="1" height="1"/><rect x="6" y="8" width="1" height="1"/><rect x="8" y="8" width="1" height="1"/><rect x="0" y="10" width="1" height="1"/><rect x="2" y="10" width="1" height="1"/><rect x="4" y="10" width="1" height="1"/><rect x="6" y="10" width="1" height="1"/><rect x="8" y="10" width="1" height="1"/><rect x="10" y="10" width="1" height="1"/><rect x="0" y="12" width="1" height="1"/><rect x="2" y="12" width="1" height="1"/><rect x="4" y="12" width="1" height="1"/><rect x="6" y="12" width="1" height="1"/><rect x="8" y="12" width="1" height="1"/><rect x="10" y="12" width="1" height="1"/><rect x="12" y="12" width="1" height="1"/><rect x="0" y="14" width="1" height="1"/><rect x="2" y="14" width="1" height="1"/><rect x="4" y="14" width="1" height="1"/><rect x="6" y="14" width="1" height="1"/><rect x="8" y="14" width="1" height="1"/><rect x="10" y="14" width="1" height="1"/><rect x="0" y="16" width="1" height="1"/><rect x="2" y="16" width="1" height="1"/><rect x="4" y="16" width="1" height="1"/><rect x="6" y="16" width="1" height="1"/><rect x="8" y="16" width="1" height="1"/><rect x="0" y="18" width="1" height="1"/><rect x="2" y="18" width="1" height="1"/><rect x="4" y="18" width="1" height="1"/><rect x="6" y="18" width="1" height="1"/><rect x="0" y="20" width="1" height="1"/><rect x="2" y="20" width="1" height="1"/><rect x="4" y="20" width="1" height="1"/><rect x="0" y="22" width="1" height="1"/><rect x="2" y="22" width="1" height="1"/><rect x="0" y="24" width="1" height="1"/></svg>
<div class="abs ann" style="left:668px;top:158px;width:636px;height:113px"></div>
<div class="abs ann" style="left:1069px;top:99px;width:103px;height:62px"></div>
<div class="abs ann" style="left:690px;top:699px;width:91px;height:51px"></div>
<div class="abs annn" style="left:1277px;top:243px">1</div>
<div class="abs annn" style="left:784px;top:718px">2</div>
<div class="abs annn" style="left:1153px;top:116px">3</div>
<!--/RIGHT-->

<div class="abs" id="frT"></div><div class="abs" id="frL"></div><div class="abs" id="frR"></div><div class="abs" id="frB"></div>
<div class="abs" id="cTL"></div><div class="abs" id="cTR"></div>
</body>
</html>
